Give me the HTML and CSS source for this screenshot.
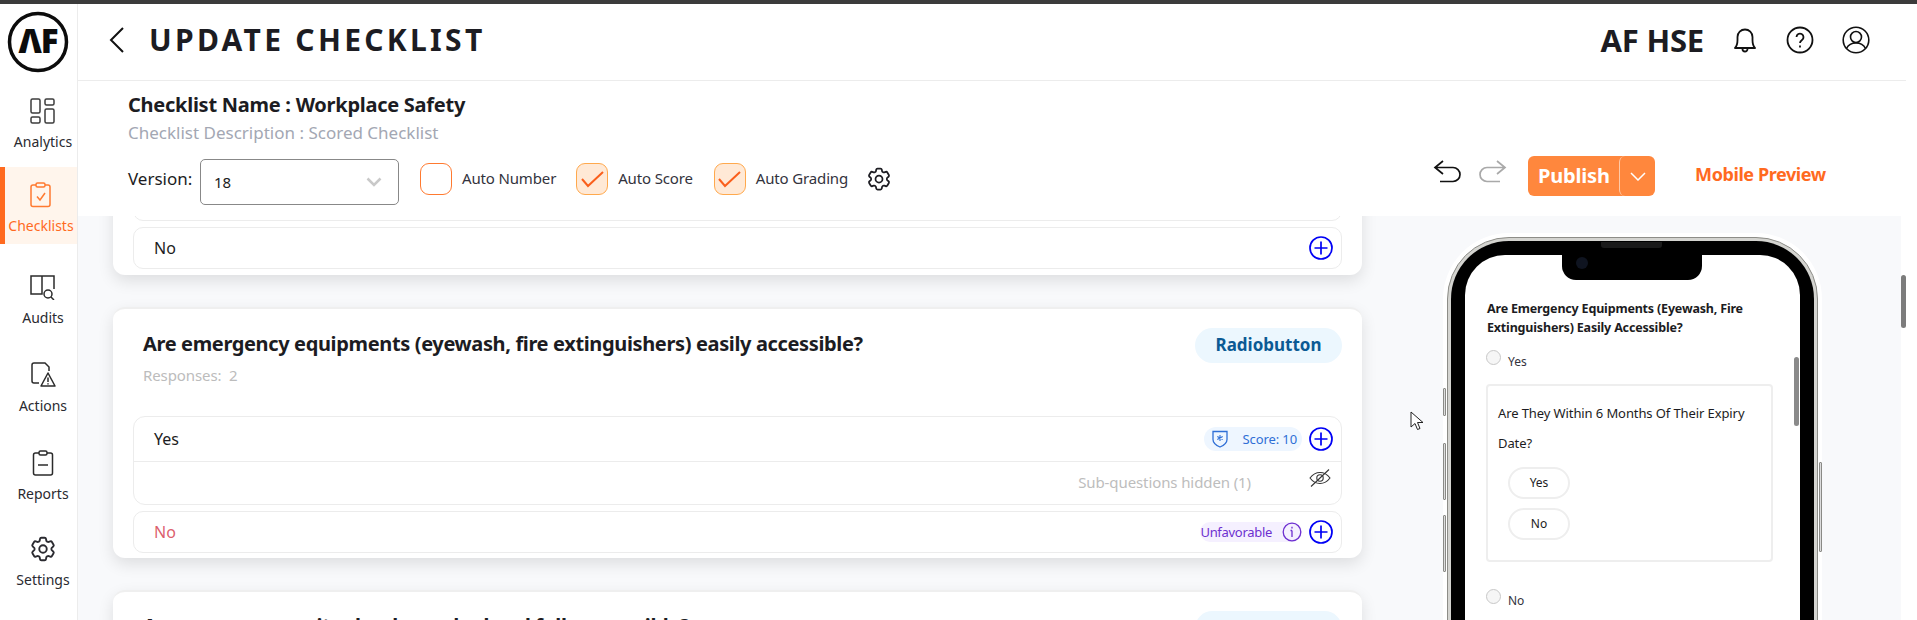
FILE: index.html
```html
<!DOCTYPE html>
<html lang="en">
<head>
    <meta charset="UTF-8">
    <title>Update Checklist</title>
    <link rel="stylesheet" href="styles.css">
</head>
<body>
    <svg class="defs" width="0" height="0">
        <symbol id="gear" viewBox="0 0 24 24">
            <path fill="none" stroke="currentColor" stroke-width="1.5" stroke-linejoin="round" d="M9.594 3.94c.09-.542.56-.94 1.11-.94h2.593c.55 0 1.02.398 1.11.94l.213 1.281c.063.374.313.686.645.87.074.04.147.083.22.127.324.196.72.257 1.075.124l1.217-.456a1.125 1.125 0 011.37.49l1.296 2.247a1.125 1.125 0 01-.26 1.431l-1.003.827c-.293.24-.438.613-.431.992a6.759 6.759 0 010 .255c-.007.378.138.75.43.99l1.005.828c.424.35.534.954.26 1.43l-1.298 2.247a1.125 1.125 0 01-1.369.491l-1.217-.456c-.355-.133-.75-.072-1.076.124a6.57 6.57 0 01-.22.128c-.331.183-.581.495-.644.869l-.213 1.28c-.09.543-.56.941-1.11.941h-2.594c-.55 0-1.02-.398-1.11-.94l-.213-1.281c-.062-.374-.312-.686-.644-.87a6.52 6.52 0 01-.22-.127c-.325-.196-.72-.257-1.076-.124l-1.217.456a1.125 1.125 0 01-1.369-.49l-1.297-2.247a1.125 1.125 0 01.26-1.431l1.004-.827c.292-.24.437-.613.43-.992a6.932 6.932 0 010-.255c.007-.378-.138-.75-.43-.99l-1.004-.828a1.125 1.125 0 01-.26-1.43l1.297-2.247a1.125 1.125 0 011.37-.491l1.216.456c.356.133.751.072 1.076-.124.072-.044.146-.087.22-.128.332-.183.582-.495.644-.869l.214-1.281z"/>
            <circle cx="12" cy="12" r="3" fill="none" stroke="currentColor" stroke-width="1.5"/>
        </symbol>
        <symbol id="plus" viewBox="0 0 24 24">
            <circle cx="12" cy="12" r="11" fill="none" stroke="currentColor" stroke-width="1.7"/>
            <path d="M12 5.5v13M5.5 12h13" fill="none" stroke="currentColor" stroke-width="1.7"/>
        </symbol>
        <symbol id="check" viewBox="0 0 32 32">
            <path d="M6 16l6 7L27 9" fill="none" stroke="currentColor" stroke-width="2"/>
        </symbol>
    </svg>

    <div class="topline"></div>
    <div class="app">
        <aside class="sidebar">
            <svg class="logo" width="62" height="62" viewBox="0 0 62 62">
                <circle cx="31" cy="31" r="28.5" fill="#fff" stroke="#0c0c0c" stroke-width="3.5"/>
                <text x="31" y="42" text-anchor="middle" class="logo-text">ΛF</text>
            </svg>
            <nav class="nav">
                <a class="nav-item">
                    <svg width="26" height="26" viewBox="0 0 26 26" fill="none" stroke="#3d3d3d" stroke-width="1.5">
                        <rect x="1" y="1" width="9" height="14" rx="1.5"/>
                        <rect x="1" y="19" width="9" height="6" rx="1.5"/>
                        <rect x="15" y="1" width="9" height="6" rx="1.5"/>
                        <rect x="15" y="11" width="9" height="14" rx="1.5"/>
                    </svg>
                    <span>Analytics</span>
                </a>
                <a class="nav-item active">
                    <svg width="24" height="26" viewBox="0 0 24 26" fill="none" stroke="#ff7a30" stroke-width="1.5">
                        <rect x="2" y="3" width="19" height="21.5" rx="2"/>
                        <rect x="7" y="1" width="9" height="4" rx="1.5" fill="#fff5ec"/>
                        <path d="M8 14.5l3 3.5 5-7"/>
                    </svg>
                    <span>Checklists</span>
                </a>
                <a class="nav-item">
                    <svg width="26" height="26" viewBox="0 0 26 26" fill="none" stroke="#2b2b2b" stroke-width="1.5">
                        <path d="M12 20H1V2h11zM12 2h12v13M12 2v10"/>
                        <circle cx="18" cy="20" r="4" fill="#fff"/>
                        <path d="M21 23l3 3"/>
                    </svg>
                    <span>Audits</span>
                </a>
                <a class="nav-item">
                    <svg width="26" height="26" viewBox="0 0 26 26" fill="none" stroke="#2b2b2b" stroke-width="1.5">
                        <path d="M9 21H4a2 2 0 0 1-2-2V3a2 2 0 0 1 2-2h11l4 4v4"/>
                        <path d="M18 11l7 13H11z" fill="#fff" stroke-linejoin="round"/>
                        <path d="M18 15.5v4.5M18 21.2v1.2"/>
                    </svg>
                    <span>Actions</span>
                </a>
                <a class="nav-item">
                    <svg width="24" height="26" viewBox="0 0 24 26" fill="none" stroke="#2b2b2b" stroke-width="1.5">
                        <rect x="2.5" y="3" width="19" height="22" rx="2"/>
                        <rect x="8" y="1" width="8" height="4" rx="1.5" fill="#fff"/>
                        <path d="M7 15h10"/>
                    </svg>
                    <span>Reports</span>
                </a>
                <a class="nav-item">
                    <svg class="nav-gear" width="30" height="30"><use href="#gear"/></svg>
                    <span>Settings</span>
                </a>
            </nav>
        </aside>

        <main class="main">
            <header class="header">
                <svg class="back" width="16" height="26" viewBox="0 0 16 26" fill="none" stroke="#111" stroke-width="2"><path d="M14 1L2 13l12 12"/></svg>
                <h1 class="page-title">UPDATE CHECKLIST</h1>
                <div class="org">AF HSE</div>
                <svg class="header-icon" width="26" height="28" viewBox="0 0 26 28" fill="none" stroke="#111" stroke-width="1.8">
                    <path d="M3 22c2-2 2.5-4 2.5-8V11a7.5 7.5 0 0 1 15 0v3c0 4 .5 6 2.5 8z" stroke-linejoin="round"/>
                    <path d="M10.5 23a2.5 2.5 0 0 0 5 0"/>
                </svg>
                <svg class="header-icon" width="28" height="28" viewBox="0 0 28 28" fill="none" stroke="#111" stroke-width="1.8">
                    <circle cx="14" cy="14" r="12.5"/>
                    <path d="M10.5 11a3.5 3.5 0 1 1 5.5 3c-1.3.9-2 1.5-2 3"/>
                    <path d="M14 19.5v2"/>
                </svg>
                <svg class="header-icon" width="28" height="28" viewBox="0 0 28 28" fill="none" stroke="#111" stroke-width="1.6">
                    <circle cx="14" cy="14" r="12.8"/>
                    <circle cx="14" cy="11" r="5.5"/>
                    <path d="M4.5 22.5c2-4 5.5-5.500 9.500-5.500s7.500 1.500 9.500 5.500"/>
                </svg>
            </header>

            <section class="subheader">
                <div class="checklist-name">Checklist Name : Workplace Safety</div>
                <div class="checklist-desc">Checklist Description : Scored Checklist</div>
                <div class="toolbar">
                    <label class="version-label">Version:</label>
                    <div class="select">
                        <span>18</span>
                        <svg width="16" height="10" viewBox="0 0 16 10" fill="none" stroke="#c9c9c9" stroke-width="2.5"><path d="M1.5 1.5L8 8l6.5-6.5"/></svg>
                    </div>
                    <div class="check-box"></div>
                    <span class="check-label first">Auto Number</span>
                    <div class="check-box checked"><svg width="32" height="32"><use href="#check"/></svg></div>
                    <span class="check-label second">Auto Score</span>
                    <div class="check-box checked"><svg width="32" height="32"><use href="#check"/></svg></div>
                    <span class="check-label third">Auto Grading</span>
                    <svg class="toolbar-gear" width="28" height="28"><use href="#gear"/></svg>
                    <svg class="undo" width="28" height="24" viewBox="0 0 28 24" fill="none" stroke="#111" stroke-width="1.7"><path d="M10 1L2 7.5l8 6.5M2 7.5h18a6.5 6.5 0 0 1 0 14H7"/></svg>
                    <svg class="redo" width="28" height="24" viewBox="0 0 28 24" fill="none" stroke="#a9a9a9" stroke-width="1.7"><path d="M18 1l8 6.5L18 14M26 7.5H8a6.5 6.5 0 0 0 0 14h13"/></svg>
                    <div class="publish">
                        <span class="publish-text">Publish</span>
                        <span class="publish-arrow"><svg width="16" height="9" viewBox="0 0 16 9" fill="none" stroke="#fff" stroke-width="1.5"><path d="M1 1l7 7 7-7"/></svg></span>
                    </div>
                    <a class="mobile-preview">Mobile Preview</a>
                </div>
            </section>

            <section class="workspace">
                <div class="questions">
                    <div class="card card-scrolled">
                        <div class="row single"></div>
                        <div class="row single"><span>No</span><svg class="add" width="24" height="24"><use href="#plus"/></svg></div>
                    </div>

                    <div class="card">
                        <div class="card-head">
                            <div class="card-title">
                                <h2 class="question">Are emergency equipments (eyewash, fire extinguishers) easily accessible?</h2>
                                <div class="responses">Responses:&nbsp; 2</div>
                            </div>
                            <span class="type-pill">Radiobutton</span>
                        </div>
                        <div class="row-group">
                            <div class="row">
                                <span>Yes</span>
                                <span class="score-pill">
                                    <svg width="16" height="18" viewBox="0 0 16 18" fill="none" stroke="#2f6fd6" stroke-width="1.3">
                                        <path d="M1 1.5h14v8c0 3.5-3.5 6-7 7.5-3.5-1.5-7-4-7-7.5z"/>
                                        <path d="M8 5v6M5.3 6.500l5.4 3M10.7 6.500l-5.4 3" stroke-width="1.1"/>
                                    </svg>
                                    Score: 10
                                </span>
                                <svg class="add" width="24" height="24"><use href="#plus"/></svg>
                            </div>
                            <div class="row sub-row">
                                <span class="hidden-note">Sub-questions hidden (1)</span>
                                <svg class="eye" width="22" height="18" viewBox="0 0 22 18" fill="none" stroke="#333" stroke-width="1.1">
                                    <path d="M1 9c3-4 6.5-5.5 10-5.5S18 5 21 9c-3 4-6.5 5.5-10 5.5S4 13 1 9z"/>
                                    <circle cx="11" cy="9" r="3.2"/>
                                    <path d="M2 17.5L20 .5"/>
                                </svg>
                            </div>
                        </div>
                        <div class="row single">
                            <span class="unfavorable-text">No</span>
                            <span class="unfav-pill">Unfavorable
                                <svg width="20" height="20" viewBox="0 0 20 20" fill="none" stroke="#6d2fd0" stroke-width="1.3">
                                    <circle cx="10" cy="10" r="8.8"/>
                                    <path d="M10 8.5V15M8.5 8.5H10M10 4.8v1.6"/>
                                </svg>
                            </span>
                            <svg class="add" width="24" height="24"><use href="#plus"/></svg>
                        </div>
                    </div>

                    <div class="card">
                        <div class="card-head">
                            <h2 class="question">Are emergency exits clearly marked and fully accessible?</h2>
                            <span class="type-pill">Radiobutton</span>
                        </div>
                    </div>
                </div>

                <div class="preview">
                    <svg class="cursor" width="14" height="20" viewBox="0 0 14 20" fill="#fff" stroke="#222" stroke-width="1"><path d="M1 1v15l4-3.5 2.5 6 2.5-1-2.5-6H13z"/></svg>
                    <div class="phone">
                        <i class="side-btn left one"></i>
                        <i class="side-btn left two"></i>
                        <i class="side-btn left three"></i>
                        <i class="side-btn right"></i>
                        <div class="bezel">
                            <div class="notch"><i class="speaker"></i><i class="camera"></i></div>
                            <div class="screen">
                                <div class="screen-scroll"></div>
                                <p class="phone-question">Are Emergency Equipments (Eyewash, Fire Extinguishers) Easily Accessible?</p>
                                <div class="radio-line"><i class="radio"></i><span>Yes</span></div>
                                <div class="sub-card">
                                    <p class="sub-question">Are They Within 6 Months Of Their Expiry Date?</p>
                                    <div class="chip">Yes</div>
                                    <div class="chip">No</div>
                                </div>
                                <div class="radio-line"><i class="radio"></i><span>No</span></div>
                            </div>
                        </div>
                    </div>
                </div>

                <div class="scrollbar"><i></i></div>
            </section>
        </main>
    </div>
</body>
</html>
```

FILE: styles.css
```css
:root {
    --orange: #ff6a1f;
    --line: #ececec;
    --page: #f8f9fb;
}

* {
    box-sizing: border-box;
}

body {
    margin: 0;
    height: 620px;
    overflow: hidden;
    background: #fff;
    color: #1c1c22;
    font-family: "Noto Sans", "Open Sans", sans-serif;
}

.defs {
    position: absolute;
}

svg {
    display: block;
    flex: none;
}

.topline {
    height: 4px;
    background: #3b3b3b;
}

.app {
    display: flex;
    width: 1906px;
    height: 616px;
}

/* sidebar */
.sidebar {
    width: 78px;
    flex: none;
    border-right: 1px solid var(--line);
}

.logo {
    margin: 7px 0 0 7px;
}

.logo-text {
    font-size: 33px;
    font-weight: 900;
    letter-spacing: -1px;
    fill: #0c0c0c;
}

.nav {
    margin-top: 10px;
}

.nav-item {
    display: flex;
    flex-direction: column;
    align-items: center;
    height: 77px;
    margin-top: 11px;
    padding: 15px 0 0 9px;
    gap: 8px;
    color: #2a2a30;
    font-size: 14px;
    line-height: 20px;
}

.nav-item:first-child {
    margin-top: 0;
}

.nav-item.active {
    margin-top: 7px;
    padding-left: 0;
    border-left: 5px solid var(--orange);
    background: #fff5ec;
    color: var(--orange);
}

.nav-item.active + .nav-item {
    margin-top: 15px;
}

.nav-item:last-child {
    margin-top: 9px;
}

.nav-gear {
    margin: -2px 0;
}

/* header */
.main {
    display: flex;
    flex-direction: column;
    width: 1828px;
}

.header {
    display: flex;
    align-items: center;
    height: 77px;
    padding: 0 36px 5px 31px;
    border-bottom: 1px solid var(--line);
}

.page-title {
    margin: 0 auto 0 24px;
    font-size: 30px;
    font-weight: 700;
    letter-spacing: 3.3px;
}

.org {
    margin-right: 28px;
    font-size: 31px;
    font-weight: 700;
    letter-spacing: -0.2px;
}

.header-icon {
    margin-left: 28px;
}

.org + .header-icon {
    margin-left: 0;
}

/* checklist info */
.subheader {
    height: 135px;
    padding: 9px 0 0 50px;
}

.checklist-name {
    font-size: 20px;
    font-weight: 700;
    letter-spacing: -0.26px;
    line-height: 30px;
}

.checklist-desc {
    font-size: 17px;
    line-height: 26px;
    color: #a3a7b3;
}

.toolbar {
    display: flex;
    align-items: center;
    height: 46px;
    margin-top: 13px;
    font-size: 15px;
}

.version-label {
    width: 72px;
    font-size: 17px;
    margin-top: -7px;
}

.select {
    display: flex;
    align-items: center;
    justify-content: space-between;
    width: 199px;
    height: 46px;
    padding: 0 16px 0 13px;
    border: 1px solid #888;
    border-radius: 5px;
    margin-right: 21px;
}

.check-box {
    width: 32px;
    height: 32px;
    margin-top: -6px;
    border: 1.5px solid #ff7a30;
    border-radius: 9px;
}

.check-box.checked {
    border-color: #ffa94d;
    background: #ffe9d6;
    color: #fa5f1c;
}

.check-box svg {
    margin: -1.5px;
}

.check-label {
    margin: -8px 0 0 10px;
    color: #33333d;
    letter-spacing: -0.15px;
}

.check-label.first {
    margin-right: 20px;
}

.check-label.second {
    margin-right: 21px;
}

.check-label.third {
    margin-right: 17px;
}

.toolbar-gear {
    margin-top: -6px;
}

.undo {
    margin: -20px 0 0 540px;
}

.redo {
    margin: -20px 21px 0 18px;
}

.publish {
    display: flex;
    align-items: center;
    width: 127px;
    height: 40px;
    margin-top: -12px;
    border-radius: 6px;
    background: #ff873d;
    color: #fff;
}

.publish-text {
    width: 91px;
    padding: 0 0 2px 10px;
    font-size: 20px;
    font-weight: 700;
    letter-spacing: -0.2px;
}

.publish-arrow {
    display: flex;
    align-items: center;
    justify-content: center;
    width: 36px;
    height: 40px;
    border-left: 1px solid #ffc9a6;
    border-radius: 6px;
}

.mobile-preview {
    margin: -16px 0 0 40px;
    font-size: 18px;
    font-weight: 700;
    letter-spacing: -0.42px;
    color: var(--orange);
}

/* scroll area */
.workspace {
    position: relative;
    display: flex;
    flex: 1;
    overflow: hidden;
    background: var(--page);
}

.questions {
    width: 1284px;
    flex: none;
    padding-left: 35px;
    margin-top: -40px;
}

.card {
    width: 1249px;
    margin-bottom: 32px;
    padding: 19px 20px 5px;
    border-top: 2px solid #efefef;
    border-radius: 12px;
    background: #fff;
    box-shadow: 0 6px 16px rgba(0, 0, 0, 0.11);
}

.card-scrolled {
    padding-top: 1px;
    padding-bottom: 6px;
}

.card-head {
    display: flex;
    justify-content: space-between;
    height: 88px;
    padding-left: 10px;
}

.card-title {
    padding-top: 1px;
}

.question {
    margin: 0;
    font-size: 20px;
    font-weight: 700;
    letter-spacing: -0.36px;
    line-height: 30px;
}

.responses {
    margin-top: 6px;
    font-size: 15px;
    letter-spacing: -0.1px;
    color: #bcbcbc;
}

.type-pill {
    height: 35px;
    width: 147px;
    border-radius: 18px;
    background: #ecf7fe;
    color: #0b5a94;
    font-size: 17px;
    font-weight: 700;
    line-height: 34px;
    text-align: center;
}

.row-group {
    border: 1px solid var(--line);
    border-radius: 12px;
    margin-bottom: 6px;
}

.row {
    display: flex;
    align-items: center;
    height: 44px;
    padding: 0 8px 0 20px;
    font-size: 16px;
}

.row > span:first-child {
    margin-right: auto;
}

.row.single {
    height: 42px;
    border: 1px solid var(--line);
    border-radius: 10px;
}

.row.single + .row.single {
    margin-top: 6px;
}

.sub-row.row {
    height: 43px;
    justify-content: flex-end;
    border-top: 1px solid var(--line);
}

.row > .hidden-note:first-child {
    margin: 0 60px 2px auto;
    font-size: 15px;
    letter-spacing: -0.1px;
    color: #bdbdbd;
}

.eye {
    position: relative;
    left: -2px;
    margin-top: -10px;
}

.add {
    margin-left: 7px;
    color: #0000f5;
}

.score-pill {
    display: flex;
    align-items: center;
    gap: 14px;
    height: 24px;
    padding: 0 5px 0 8px;
    border-radius: 12px;
    background: #eef6ff;
    color: #2f6fd6;
    font-size: 13px;
    letter-spacing: -0.1px;
}

.unfavorable-text {
    color: #dc5f6e;
}

.unfav-pill {
    display: flex;
    align-items: center;
    gap: 10px;
    height: 20px;
    border-radius: 10px;
    background: #f5f0ff;
    color: #6d2fd0;
    font-size: 13px;
    letter-spacing: -0.3px;
}

.scrollbar {
    position: absolute;
    top: 0;
    right: 0;
    width: 5px;
    height: 100%;
    background: #fff;
}

.scrollbar i {
    display: block;
    height: 53px;
    margin-top: 59px;
    border-radius: 3px;
    background: #7c7c7c;
}

/* phone preview */
.preview {
    padding: 21px 0 0 85px;
}

.cursor {
    position: absolute;
    left: 1332px;
    top: 195px;
}

.phone {
    position: relative;
    width: 371px;
    height: 700px;
    padding: 3px;
    border: 1.5px solid #8d8d88;
    border-radius: 62px;
    background: #d4d4d0;
    box-shadow: 0 0 0 4px #fff;
}

.side-btn {
    position: absolute;
    width: 3px;
    border: 1px solid #8a8a86;
    border-radius: 1px;
    background: #ddd;
}

.side-btn.left {
    left: -5px;
}

.side-btn.right {
    right: -5px;
    top: 224px;
    height: 90px;
}

.side-btn.one {
    top: 150px;
    height: 28px;
}

.side-btn.two {
    top: 205px;
    height: 57px;
}

.side-btn.three {
    top: 277px;
    height: 57px;
}

.bezel {
    position: relative;
    height: 100%;
    padding: 14px;
    border-radius: 58px;
    background: #000;
}

.notch {
    position: absolute;
    z-index: 1;
    left: 111px;
    top: 0;
    width: 140px;
    height: 39px;
    border-radius: 0 0 14px 14px;
    background: #000;
}

.speaker {
    position: absolute;
    left: 39px;
    top: 1px;
    width: 61px;
    height: 6px;
    border-radius: 0 0 3px 3px;
    background: #1a1a1a;
}

.camera {
    position: absolute;
    left: 14px;
    top: 16px;
    width: 12px;
    height: 12px;
    border-radius: 50%;
    background: #0f1420;
}

.screen {
    position: relative;
    height: 100%;
    padding: 45px 26px 0 21px;
    border-radius: 40px;
    background: #fff;
    font-size: 12px;
}

.screen-scroll {
    position: absolute;
    top: 102px;
    right: 1px;
    width: 5px;
    height: 69px;
    border-radius: 3px;
    background: #8a8a8a;
}

.phone-question {
    margin: 0 0 0 1px;
    font-size: 12.5px;
    font-weight: 700;
    letter-spacing: -0.18px;
    line-height: 18.5px;
}

.radio-line {
    display: flex;
    gap: 7px;
    margin-top: 13px;
    color: #33333d;
}

.radio-line span {
    padding-top: 3px;
}

.radio {
    width: 15px;
    height: 15px;
    border: 1px solid #c8c8c8;
    border-radius: 50%;
    background: #f6f6f6;
}

.sub-card {
    width: 287px;
    height: 178px;
    margin: 14px 0 27px;
    padding: 12px 10px;
    border: 2px solid #eee;
    border-radius: 4px;
}

.sub-question {
    margin: 0 0 9px;
    font-size: 13px;
    letter-spacing: -0.1px;
    line-height: 30px;
}

.chip {
    width: 62px;
    height: 32px;
    margin: 0 0 9px 10px;
    border: 2px solid #eee;
    border-radius: 16px;
    line-height: 28px;
    text-align: center;
}
```
